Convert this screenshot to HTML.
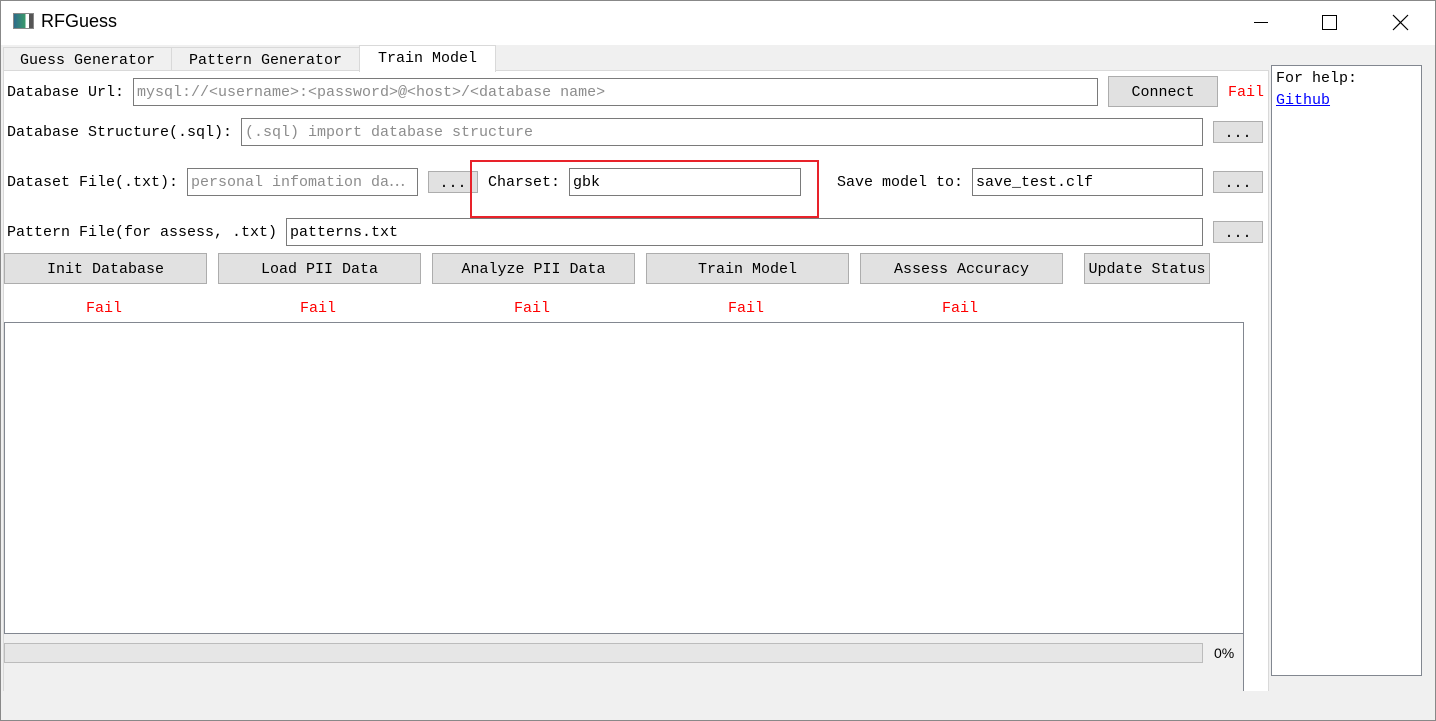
<!DOCTYPE html>
<html><head><meta charset="utf-8"><style>
*{box-sizing:border-box;margin:0;padding:0}
body{width:1436px;height:721px;background:#f0f0f0;position:relative;overflow:hidden;font-family:"Liberation Mono","Noto Sans CJK SC",monospace;font-size:15px;color:#000}
.a{position:absolute}
.title{left:0;top:0;width:1436px;height:45px;background:#fff}
.inp{position:absolute;background:#fff;border:1px solid #7a7a7a;height:28px;line-height:28px;padding-left:3px;white-space:nowrap;overflow:hidden}
.ph{color:#8c8c8c}
.btn{position:absolute;background:#e1e1e1;border:1px solid #adadad;text-align:center;line-height:31px;height:31px}
.lbl{position:absolute;white-space:nowrap;line-height:20px}
.fail{position:absolute;color:#ff0000;line-height:20px}
</style></head><body>
<div class="a" style="left:0;top:0;width:1436px;height:721px;border:1px solid #888"></div>
<div class="a title" style="border:1px solid #888;border-bottom:none"></div>
<div class="a" style="left:13px;top:13px;width:21px;height:16px;border:1px solid #888;background:linear-gradient(90deg,#2d6b8a 0,#3a9a6a 60%,#fff 60%,#fff 78%,#555 78%)"></div>
<div class="a" style="left:41px;top:11px;font-family:'Liberation Sans',sans-serif;font-size:18px">RFGuess</div>
<div class="a" style="left:1254px;top:22px;width:14px;height:1px;background:#000"></div>
<div class="a" style="left:1322px;top:15px;width:15px;height:15px;border:1px solid #000"></div>
<svg class="a" style="left:1392px;top:14px" width="17" height="17"><path d="M1 1L16 16M16 1L1 16" stroke="#000" stroke-width="1.2"/></svg>

<div class="a" style="left:3px;top:47px;width:169px;height:24px;background:#f0f0f0;border:1px solid #d9d9d9;border-bottom:none;text-align:center;line-height:26px">Guess Generator</div>
<div class="a" style="left:171px;top:47px;width:189px;height:24px;background:#f0f0f0;border:1px solid #d9d9d9;border-bottom:none;text-align:center;line-height:26px">Pattern Generator</div>
<div class="a" style="left:359px;top:45px;width:137px;height:27px;background:#fff;border:1px solid #d9d9d9;border-bottom:none;text-align:center;line-height:26px;z-index:2">Train Model</div>
<div class="a" style="left:3px;top:70px;width:1266px;height:621px;background:#fff;border:1px solid #d9d9d9;border-bottom:none"></div>

<div class="lbl" style="left:7px;top:83px">Database Url:</div>
<div class="inp ph" style="left:133px;top:78px;width:965px">mysql://&lt;username&gt;:&lt;password&gt;@&lt;host&gt;/&lt;database name&gt;</div>
<div class="btn" style="left:1108px;top:76px;width:110px">Connect</div>
<div class="fail" style="left:1228px;top:83px">Fail</div>

<div class="lbl" style="left:7px;top:123px">Database Structure(.sql):</div>
<div class="inp ph" style="left:241px;top:118px;width:962px">(.sql) import database structure</div>
<div class="btn" style="left:1213px;top:121px;width:50px;height:22px;line-height:24px">...</div>

<div class="lbl" style="left:7px;top:173px">Dataset File(.txt):</div>
<div class="inp ph" style="left:187px;top:168px;width:231px">personal infomation da⋯</div>
<div class="btn" style="left:428px;top:171px;width:50px;height:22px;line-height:24px">...</div>
<div class="a" style="left:470px;top:160px;width:349px;height:58px;border:2px solid #e8222a"></div>
<div class="lbl" style="left:488px;top:173px">Charset:</div>
<div class="inp" style="left:569px;top:168px;width:232px">gbk</div>
<div class="lbl" style="left:837px;top:173px">Save model to:</div>
<div class="inp" style="left:972px;top:168px;width:231px">save_test.clf</div>
<div class="btn" style="left:1213px;top:171px;width:50px;height:22px;line-height:24px">...</div>

<div class="lbl" style="left:7px;top:223px">Pattern File(for assess, .txt)</div>
<div class="inp" style="left:286px;top:218px;width:917px">patterns.txt</div>
<div class="btn" style="left:1213px;top:221px;width:50px;height:22px;line-height:24px">...</div>

<div class="btn" style="left:4px;top:253px;width:203px">Init Database</div>
<div class="btn" style="left:218px;top:253px;width:203px">Load PII Data</div>
<div class="btn" style="left:432px;top:253px;width:203px">Analyze PII Data</div>
<div class="btn" style="left:646px;top:253px;width:203px">Train Model</div>
<div class="btn" style="left:860px;top:253px;width:203px">Assess Accuracy</div>
<div class="btn" style="left:1084px;top:253px;width:126px">Update Status</div>

<div class="fail" style="left:86px;top:299px">Fail</div>
<div class="fail" style="left:300px;top:299px">Fail</div>
<div class="fail" style="left:514px;top:299px">Fail</div>
<div class="fail" style="left:728px;top:299px">Fail</div>
<div class="fail" style="left:942px;top:299px">Fail</div>

<div class="a" style="left:4px;top:634px;width:1240px;height:57px;background:#f0f0f0;border-right:1px solid #828790"></div>
<div class="a" style="left:4px;top:322px;width:1240px;height:312px;background:#fff;border:1px solid #828790"></div>
<div class="a" style="left:4px;top:643px;width:1199px;height:20px;background:#e6e6e6;border:1px solid #bcbcbc"></div>
<div class="a" style="left:1214px;top:645px;font-family:'Liberation Sans',sans-serif;font-size:14px">0%</div>

<div class="a" style="left:1271px;top:65px;width:151px;height:611px;background:#fff;border:1px solid #828790"></div>
<div class="lbl" style="left:1276px;top:69px">For help:</div>
<div class="lbl" style="left:1276px;top:91px;color:#0000ff;text-decoration:underline">Github</div>
</body></html>
